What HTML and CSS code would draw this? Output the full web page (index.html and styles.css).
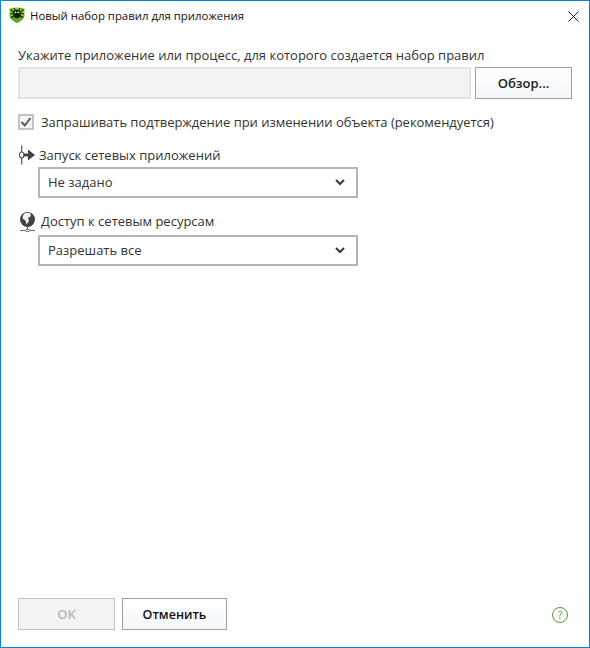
FILE: index.html
```html
<!DOCTYPE html>
<html lang="ru">
<head>
    <meta charset="UTF-8">
    <title>Новый набор правил для приложения</title>
    <link rel="stylesheet" href="styles.css">
</head>
<body>
    <div class="window">
        <div class="title-bar">
            <svg class="logo" width="16" height="16" viewBox="0 0 16 16">
                <path d="M0.500 1.500 Q8 -0.500 15.500 1.500 V8 Q15.500 12.500 8 16 Q0.500 12.500 0.500 8 Z" fill="#86cf2b"/>
                <path d="M0.500 8 Q0.500 12.500 8 16 Q15.500 12.500 15.500 8 Q8 13 0.500 8 Z" fill="#5fa71f"/>
                <g stroke="#10210a" stroke-width="1.100" fill="none">
                    <path d="M1.500 2.500 L5 5.500 M14.500 2.500 L11 5.500 M1 6.800 H5 M15 6.800 H11 M2 10.500 L5.500 8.500 M14 10.500 L10.500 8.500 M5 1 L6.500 4 M11 1 L9.500 4"/>
                </g>
                <ellipse cx="8" cy="7" rx="3.700" ry="4.300" fill="#10210a"/>
                <circle cx="6.600" cy="5.300" r="0.900" fill="#e8ffd0"/>
                <circle cx="9.400" cy="5.300" r="0.900" fill="#e8ffd0"/>
            </svg>
            <span class="title">Новый набор правил для приложения</span>
            <svg class="close" width="11" height="11" viewBox="0 0 11 11">
                <path d="M0.500 0.500 L10.500 10.500 M10.500 0.500 L0.500 10.500" stroke="#1a1a1a" stroke-width="1" fill="none"/>
            </svg>
        </div>

        <div class="content">
            <div class="field-label">Укажите приложение или процесс, для которого создается набор правил</div>
            <div class="path-row">
                <div class="path-input"></div>
                <button class="btn browse">Обзор...</button>
            </div>

            <div class="check-row">
                <span class="checkbox">
                    <svg width="12" height="12" viewBox="0 0 12 12">
                        <path d="M1.500 6 L4.800 9.500 L10.500 2" stroke="#5a5a5a" stroke-width="2" fill="none"/>
                    </svg>
                </span>
                <span>Запрашивать подтверждение при изменении объекта (рекомендуется)</span>
            </div>

            <div class="rule rule-run">
                <div class="rule-label">
                    <svg class="rule-icon" width="18" height="20" viewBox="0 0 18 20">
                        <path d="M3.700 0.500 V19.500" stroke="#55595e" stroke-width="1.200" fill="none"/>
                        <ellipse cx="3.700" cy="10" rx="2.200" ry="3" fill="#fff" stroke="#4a4f55" stroke-width="1.100"/>
                        <path d="M6 8.500 H10 V4.500 L17 10 L10 15.500 V11.500 H6 Z" fill="#3e4349"/>
                    </svg>
                    <span>Запуск сетевых приложений</span>
                </div>
                <div class="select">
                    <span>Не задано</span>
                    <svg class="chevron" width="10" height="7" viewBox="0 0 10 7">
                        <path d="M1 1 L5 5 L9 1" stroke="#333c44" stroke-width="2" fill="none"/>
                    </svg>
                </div>
            </div>

            <div class="rule rule-access">
                <div class="rule-label">
                    <svg class="rule-icon globe" width="18" height="22" viewBox="0 0 18 22">
                        <circle cx="9.500" cy="9.500" r="7.500" fill="#3e4349"/>
                        <path d="M7 3 L12 3 L13 6 L10 8 L11 11 L8.500 14.500 L7.500 10.500 L4.500 8.500 L5 5.500 Z" fill="#f4f4f4"/>
                        <path d="M9.500 17 V20" stroke="#4a4f55" stroke-width="1.200"/>
                        <path d="M2 20.500 H17" stroke="#6a6f75" stroke-width="1.100"/>
                        <ellipse cx="9.500" cy="20.500" rx="2" ry="1.200" fill="#fff" stroke="#4a4f55" stroke-width="0.900"/>
                    </svg>
                    <span>Доступ к сетевым ресурсам</span>
                </div>
                <div class="select">
                    <span>Разрешать все</span>
                    <svg class="chevron" width="10" height="7" viewBox="0 0 10 7">
                        <path d="M1 1 L5 5 L9 1" stroke="#333c44" stroke-width="2" fill="none"/>
                    </svg>
                </div>
            </div>
        </div>

        <div class="footer">
            <button class="btn ok" disabled>OK</button>
            <button class="btn cancel">Отменить</button>
            <span class="help">?</span>
        </div>
    </div>
</body>
</html>
```

FILE: styles.css
```css
html, body {
    margin: 0;
    height: 100%;
}

body {
    font-family: "Open Sans", "Noto Sans", sans-serif;
    font-size: 13px;
    color: #333;
    background: #fff;
}

.window {
    box-sizing: border-box;
    height: 648px;
    border: 1px solid #0a84d8;
    display: flex;
    flex-direction: column;
}

.title-bar {
    display: flex;
    align-items: center;
    height: 30px;
    padding: 0 10px 0 8px;
    font-size: 11.400px;
    color: #111;
}

.logo {
    margin: 0 5px 2px 0;
}

.title {
    flex: 1;
    margin-bottom: 2px;
}

.content {
    flex: 1;
    padding: 15px 17px 0;
}

.field-label {
    line-height: 18px;
    margin-bottom: 3px;
}

.path-row {
    display: flex;
    gap: 4px;
}

.path-input {
    box-sizing: border-box;
    width: 453px;
    height: 32px;
    background: #f3f3f3;
    border: 2px solid #e3e3e3;
}

.btn {
    box-sizing: border-box;
    height: 32px;
    padding: 0;
    border: 1px solid #a0a0a0;
    background: linear-gradient(#fff, #f3f5f9);
    font-family: inherit;
    font-size: 13px;
    font-weight: 600;
    color: #222;
}

.browse {
    width: 97px;
}

.check-row {
    display: flex;
    align-items: center;
    gap: 7px;
    margin-top: 15px;
    height: 16px;
    letter-spacing: -0.030px;
}

.checkbox {
    box-sizing: border-box;
    width: 16px;
    height: 16px;
    border: 2px solid #c4c4c4;
    background: #f4f4f4;
    display: flex;
    align-items: center;
    justify-content: center;
}

.rule-run {
    margin-top: 14px;
}

.rule-access {
    margin-top: 12px;
}

.rule-label {
    display: flex;
    align-items: center;
    height: 22px;
}

.rule-icon {
    margin-right: 3px;
    flex: none;
}

.globe {
    margin-right: 5px;
}

.select {
    box-sizing: border-box;
    display: flex;
    align-items: center;
    justify-content: space-between;
    width: 320px;
    height: 31px;
    margin: 1px 0 0 20px;
    padding: 0 11px 2px 8px;
    border: 2px solid #b5b5b5;
}

.chevron {
    margin-top: 2px;
}

.rule-access .select {
    margin-top: 3px;
}

.footer {
    display: flex;
    align-items: center;
    padding: 0 21px 17px 17px;
}

.ok {
    width: 97px;
    background: #f3f3f3;
    border: 1px solid #c4c4c4;
    color: #b8b8b8;
}

.cancel {
    width: 105px;
    margin-left: 7px;
    font-size: 12.500px;
    color: #111;
}

.help {
    box-sizing: border-box;
    margin-left: auto;
    margin-top: 2px;
    width: 16px;
    height: 16px;
    border: 1px solid #4f9f1a;
    border-radius: 50%;
    color: #4f9f1a;
    font-size: 11px;
    line-height: 14px;
    text-align: center;
}
```
